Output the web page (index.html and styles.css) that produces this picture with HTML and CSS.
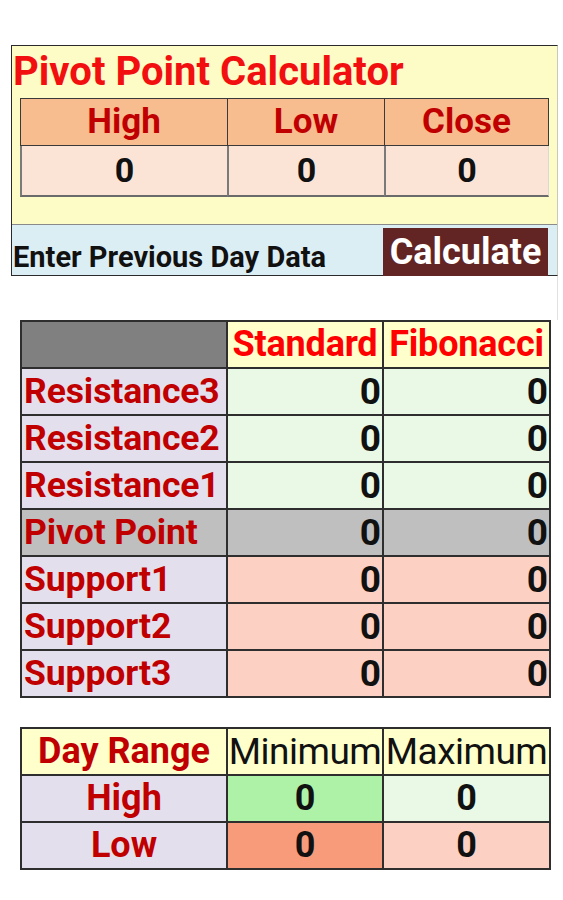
FILE: index.html
```html
<!DOCTYPE html>
<html>
<head>
<meta charset="utf-8">
<link rel="stylesheet" href="styles.css">
</head>
<body>
<div class="calc">
  <h1 class="title">Pivot Point Calculator</h1>
  <div class="inputs">
    <div class="in-head">High</div>
    <div class="in-head">Low</div>
    <div class="in-head">Close</div>
    <div class="in-val">0</div>
    <div class="in-val">0</div>
    <div class="in-val">0</div>
  </div>
  <div class="action">
    <span class="hint">Enter Previous Day Data</span>
    <button class="calc-btn">Calculate</button>
  </div>
</div>
<div class="gap"></div>
<table class="grid levels">
  <colgroup><col class="c1"><col class="c2"><col class="c3"></colgroup>
  <tr class="head"><td class="corner"></td><td class="colhead">Standard</td><td class="colhead">Fibonacci</td></tr>
  <tr class="res"><td class="label">Resistance3</td><td class="num">0</td><td class="num">0</td></tr>
  <tr class="res"><td class="label">Resistance2</td><td class="num">0</td><td class="num">0</td></tr>
  <tr class="res"><td class="label">Resistance1</td><td class="num">0</td><td class="num">0</td></tr>
  <tr class="piv"><td class="label">Pivot Point</td><td class="num">0</td><td class="num">0</td></tr>
  <tr class="sup"><td class="label">Support1</td><td class="num">0</td><td class="num">0</td></tr>
  <tr class="sup"><td class="label">Support2</td><td class="num">0</td><td class="num">0</td></tr>
  <tr class="sup"><td class="label">Support3</td><td class="num">0</td><td class="num">0</td></tr>
</table>
<table class="grid range">
  <colgroup><col class="c1"><col class="c2"><col class="c3"></colgroup>
  <tr class="head"><td class="rlabel">Day Range</td><td class="rhead">Minimum</td><td class="rhead">Maximum</td></tr>
  <tr><td class="rlabel">High</td><td class="rval hi-min">0</td><td class="rval hi-max">0</td></tr>
  <tr><td class="rlabel">Low</td><td class="rval lo-min">0</td><td class="rval lo-max">0</td></tr>
</table>
</body>
</html>
```
FILE: styles.css
```css
html, body {
  margin: 0;
  padding: 0;
  background: #ffffff;
  font-family: Roboto, "Noto Sans", sans-serif;
}

.calc {
  margin: 45px 0 0 11px;
  width: 545px;
  border: 1px solid #2a2a2a;
  border-right-color: #c8c8c0;
  background: #fdfcc6;
}

.title {
  margin: 0;
  padding: 1px 0 0 1px;
  height: 51px;
  font-size: 40px;
  line-height: 50px;
  font-weight: 700;
  color: #f20f0f;
}

.inputs {
  margin: 0 0 27px 8px;
  width: 529px;
  display: grid;
  grid-template-columns: 207px 157px 165px;
}

.in-head {
  height: 46px;
  background: #f8bd8f;
  color: #c00000;
  font-size: 35px;
  font-weight: 700;
  line-height: 46px;
  text-align: center;
  border-top: 1px solid #3a3a3a;
  border-left: 1px solid #3a3a3a;
  border-bottom: 1px solid #3a3a3a;
}

.in-head:nth-child(3) {
  border-right: 1px solid #3a3a3a;
}

.in-val {
  height: 49px;
  background: #fbe4d6;
  color: #111;
  font-size: 34px;
  font-weight: 700;
  line-height: 48px;
  text-align: center;
  border-left: 2px solid #7a7a7a;
  border-bottom: 2px solid #6a6a6a;
}

.in-val:nth-child(6) {
  border-right: 1px solid #d8d8d8;
}

.action {
  height: 50px;
  background: #dbeef4;
  border-top: 1px solid #8a8a8a;
  display: flex;
  align-items: flex-end;
  justify-content: space-between;
  padding-right: 9px;
}

.hint {
  padding-left: 1px;
  font-size: 29px;
  font-weight: 700;
  color: #111;
  line-height: 30px;
  margin-bottom: 3px;
}

.calc-btn {
  width: 165px;
  height: 48px;
  margin-bottom: -1px;
  padding: 0;
  border: none;
  background: #632523;
  color: #ffffff;
  font-family: Roboto, "Noto Sans", sans-serif;
  font-size: 36px;
  font-weight: 700;
  line-height: 48px;
}

.gap {
  margin-left: 11px;
  width: 546px;
  height: 44px;
  border-right: 1px solid #e2e2e2;
}

.grid {
  margin-left: 20px;
  border-collapse: collapse;
  table-layout: fixed;
  width: 529px;
}

.grid td {
  border: 2px solid #2e2e2e;
  padding: 0;
  white-space: nowrap;
  overflow: hidden;
}

.c1 { width: 206px; }
.c2 { width: 156px; }
.c3 { width: 167px; }

.levels td {
  height: 45px;
  font-size: 37px;
  font-weight: 700;
  line-height: 45px;
}

.levels .head td {
  height: 44px;
  font-size: 36px;
}

.corner {
  background: #808080;
}

.colhead {
  background: #ffffcc;
  color: #ff0000;
  text-align: center;
  letter-spacing: -0.2px;
}

.levels .label {
  background: #e4dfec;
  color: #c00000;
  padding-left: 2px;
  font-size: 35.5px;
  letter-spacing: -0.1px;
}

.num {
  text-align: right;
  color: #111;
  padding-right: 1px !important;
}

.res .num { background: #e9f9e6; }
.sup .num { background: #fcd1c3; }
.levels .piv td { background: #bfbfbf; }

.range {
  margin-top: 29px;
}

.range td {
  height: 45px;
  font-size: 36px;
  line-height: 45px;
  text-align: center;
}

.range .head td {
  background: #ffffcc;
}

.rlabel {
  background: #e4dfec;
  color: #c00000;
  font-weight: 700;
}

.range .head .rlabel {
  background: #ffffcc;
}

.rhead {
  color: #111;
  font-weight: 400;
  font-size: 37px !important;
  letter-spacing: -0.5px;
}

.rval {
  color: #111;
  font-weight: 700;
}

.hi-min { background: #adf2a7; }
.hi-max { background: #e9f9e6; }
.lo-min { background: #f89b7a; }
.lo-max { background: #fcd1c3; }
```
